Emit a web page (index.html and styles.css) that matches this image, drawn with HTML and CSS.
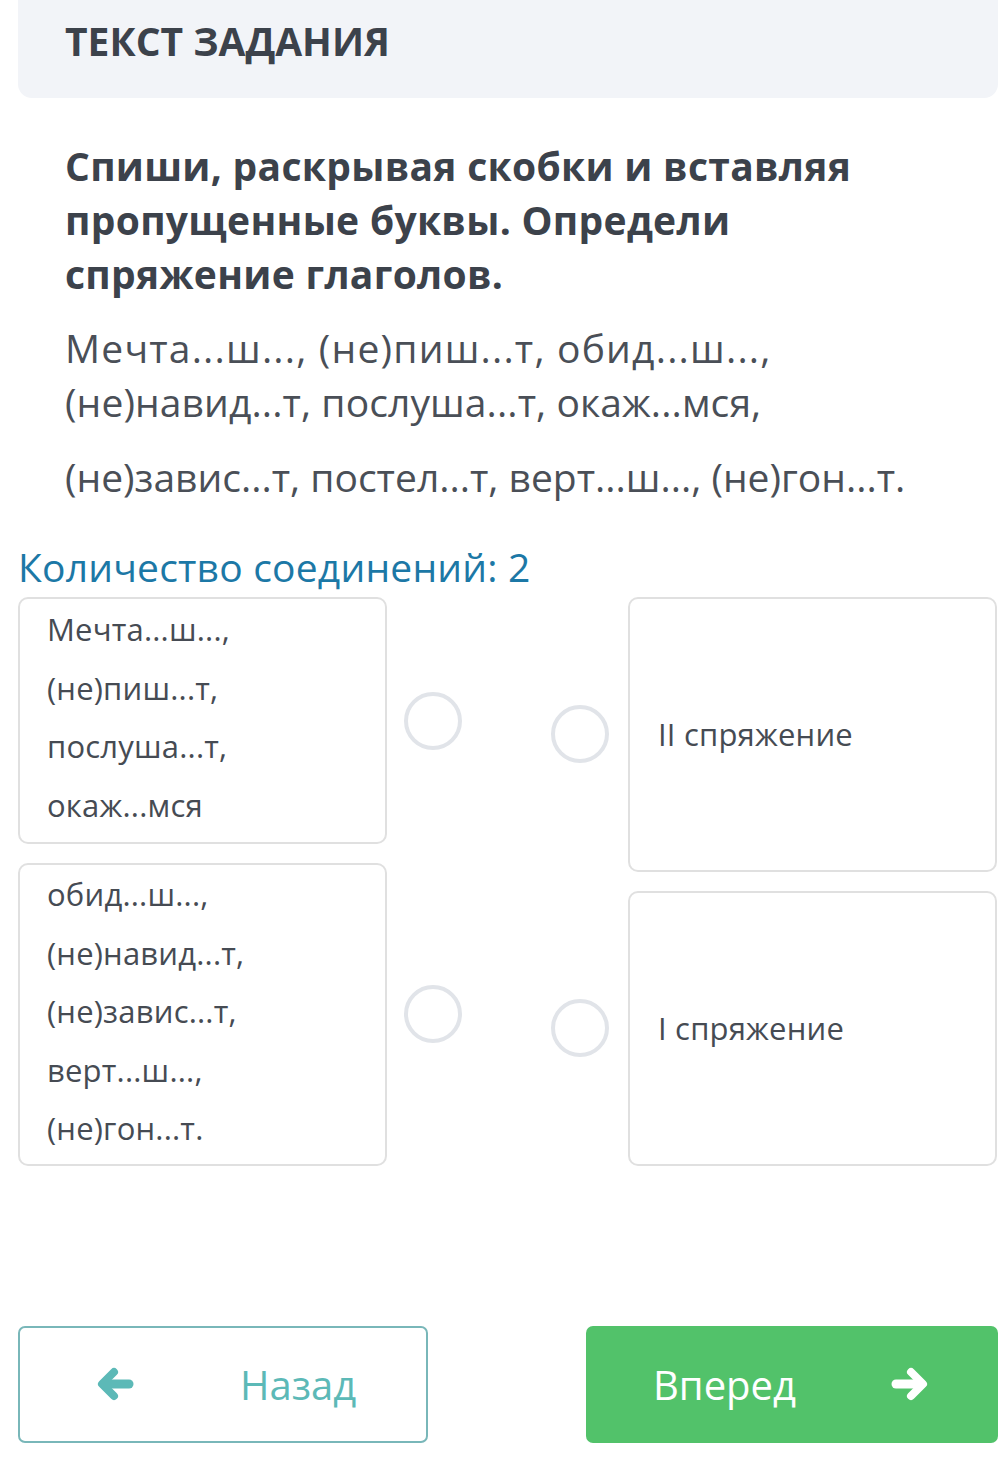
FILE: index.html
```html
<!DOCTYPE html>
<html lang="ru">
<head>
<meta charset="utf-8">
<link rel="stylesheet" href="styles.css">
</head>
<body>
<div class="page">
  <div class="task-head">ТЕКСТ ЗАДАНИЯ</div>
  <div class="task-body">
    <p class="task-title">Спиши, раскрывая скобки и вставляя пропущенные буквы. Определи спряжение глаголов.</p>
    <p class="task-text"><span class="spread">Мечта...ш..., (не)пиш...т, обид...ш...,</span> (не)навид...т, послуша...т, окаж...мся,</p>
    <p class="task-text second">(не)завис...т, постел...т, верт...ш..., (не)гон...т.</p>
  </div>
  <div class="count">Количество соединений: 2</div>
  <div class="match">
    <div class="col col-left">
      <div class="row">
        <div class="card card-left">
          <span class="line">Мечта...ш...,</span>
          <span class="line">(не)пиш...т,</span>
          <span class="line">послуша...т,</span>
          <span class="line">окаж...мся</span>
        </div>
        <div class="dot"></div>
      </div>
      <div class="row">
        <div class="card card-left second-card">
          <span class="line">обид...ш...,</span>
          <span class="line">(не)навид...т,</span>
          <span class="line">(не)завис...т,</span>
          <span class="line">верт...ш...,</span>
          <span class="line">(не)гон...т.</span>
        </div>
        <div class="dot"></div>
      </div>
    </div>
    <div class="col col-right">
      <div class="row row-right">
        <div class="dot"></div>
        <div class="card card-right">II спряжение</div>
      </div>
      <div class="row row-right">
        <div class="dot"></div>
        <div class="card card-right">I спряжение</div>
      </div>
    </div>
  </div>
  <div class="nav">
    <button class="btn btn-back">
      <svg class="arrow" viewBox="0 0 40 34" width="40" height="34" aria-hidden="true">
        <path d="M19 5 L7 17 L19 29" fill="none" stroke="currentColor" stroke-width="8" stroke-linecap="round" stroke-linejoin="round"/>
        <path d="M9 17 H34" fill="none" stroke="currentColor" stroke-width="9" stroke-linecap="round"/>
      </svg>
      <span class="btn-label">Назад</span>
    </button>
    <button class="btn btn-next">
      <span class="btn-label">Вперед</span>
      <svg class="arrow" viewBox="0 0 40 34" width="40" height="34" aria-hidden="true">
        <path d="M21 5 L33 17 L21 29" fill="none" stroke="currentColor" stroke-width="8" stroke-linecap="round" stroke-linejoin="round"/>
        <path d="M6 17 H31" fill="none" stroke="currentColor" stroke-width="9" stroke-linecap="round"/>
      </svg>
    </button>
  </div>
</div>
</body>
</html>
```

FILE: styles.css
```css
* { box-sizing: border-box; }
html, body { margin: 0; padding: 0; background: #ffffff; }
body {
  font-family: "Open Sans", "Noto Sans", "Liberation Sans", sans-serif;
  color: #464b53;
}
.page {
  width: 1002px;
  padding: 0 4px 0 18px;
}
.task-head {
  height: 98px;
  background: #f2f4f8;
  border-radius: 0 0 14px 14px;
  padding: 19px 0 0 47px;
  font-size: 39px;
  line-height: 44px;
  font-weight: 700;
  color: #3c424b;
}
.task-body {
  padding: 41px 47px 0 47px;
}
.task-body p { margin: 0; }
.task-title {
  font-size: 39px;
  line-height: 54px;
  font-weight: 700;
  letter-spacing: 0.3px;
  color: #3c424b;
}
.task-text {
  margin-top: 20px !important;
  font-size: 39px;
  line-height: 54px;
  letter-spacing: 0.1px;
  color: #4a4f57;
}
.spread { letter-spacing: 1.2px; }
.task-text.second { margin-top: 21px !important; letter-spacing: 0; }
.count {
  margin-top: 36px;
  font-size: 39px;
  line-height: 54px;
  letter-spacing: 0.2px;
  color: #1c78a6;
}
.match {
  margin-top: 3px;
  display: flex;
  justify-content: space-between;
  width: 979px;
}
.col {
  display: flex;
  flex-direction: column;
  gap: 19px;
}
.row {
  display: flex;
  align-items: center;
}
.col-right .row { flex: 1; }
.card {
  border: 2px solid #e0e0e0;
  border-radius: 10px;
  background: #fff;
  width: 369px;
  font-size: 31px;
  letter-spacing: 0.2px;
  color: #464b53;
}
.card-left {
  padding: 1px 20px 8px 27px;
  line-height: 58.5px;
}
.card-left.second-card { padding-top: 0; padding-bottom: 6px; }
.line { display: block; }
.card-left + .dot { margin-left: 17px; }
.dot {
  width: 58px;
  height: 58px;
  border: 4px solid #e1e4e9;
  border-radius: 50%;
  flex: none;
}
.row-right .dot { margin-right: 19px; }
.card-right {
  align-self: stretch;
  display: flex;
  align-items: center;
  padding-left: 28px;
  line-height: 40px;
}
.nav {
  margin-top: 160px;
  display: flex;
  justify-content: space-between;
  width: 980px;
}
.btn {
  height: 117px;
  border-radius: 7px;
  font-family: inherit;
  font-size: 40px;
  display: flex;
  align-items: center;
  cursor: pointer;
}
.btn-back {
  width: 410px;
  border: 2px solid #79b7b9;
  background: #fff;
  color: #5cb9b7;
  padding: 0 0 0 75px;
}
.btn-back .btn-label { margin-left: 105px; }
.btn-next {
  width: 412px;
  border: none;
  background: #52c26a;
  color: #ffffff;
  justify-content: space-between;
  padding: 0 68px 0 67px;
}
.arrow { display: block; flex: none; }
```
